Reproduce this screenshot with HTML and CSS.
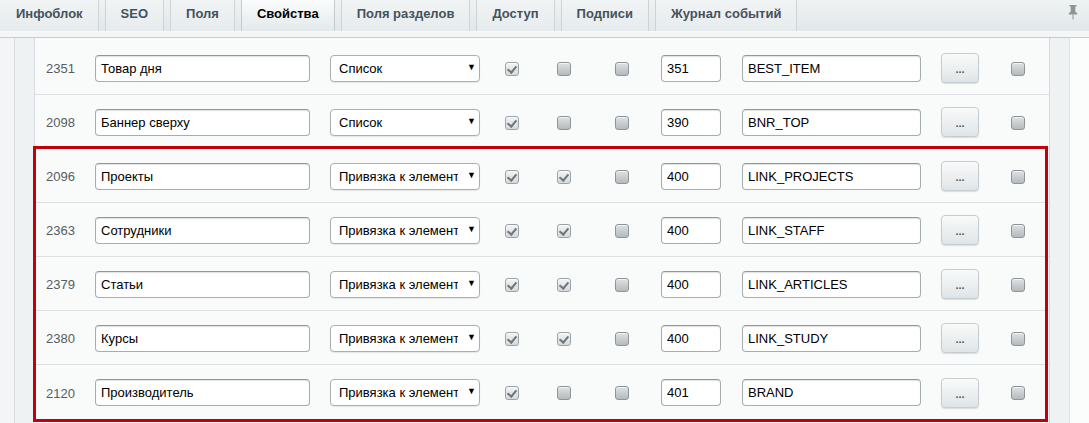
FILE: index.html
```html
<!DOCTYPE html>
<html lang="ru">
<head>
<meta charset="utf-8">
<link rel="stylesheet" href="styles.css">
</head>
<body>
<div class="tabs">
  <div class="tab first">Инфоблок</div>
  <div class="tab">SEO</div>
  <div class="tab">Поля</div>
  <div class="tab active">Свойства</div>
  <div class="tab">Поля разделов</div>
  <div class="tab">Доступ</div>
  <div class="tab">Подписи</div>
  <div class="tab">Журнал событий</div>
  <div class="pin">
    <svg width="10" height="16" viewBox="0 0 10 16"><path d="M1.5 1h7v1.5h-1.2v5l2 2v1H0.7v-1l2-2v-5H1.5z" fill="#8c9598"/><rect x="4.5" y="10.5" width="1" height="5" fill="#8c9598"/></svg>
  </div>
</div>
<div class="frame">
  <div class="strip"></div>
  <div class="panel">
    <div class="row">
      <div class="id">2351</div>
      <div><input class="inp name" value="Товар дня"></div>
      <div><div class="sel"><span class="seltext">Список</span><span class="arrow">▼</span></div></div>
      <div><span class="cb on"></span></div>
      <div><span class="cb"></span></div>
      <div><span class="cb"></span></div>
      <div><input class="inp sort" value="351"></div>
      <div><input class="inp code" value="BEST_ITEM"></div>
      <div><span class="btn">...</span></div>
      <div><span class="cb"></span></div>
    </div>
    <div class="row">
      <div class="id">2098</div>
      <div><input class="inp name" value="Баннер сверху"></div>
      <div><div class="sel"><span class="seltext">Список</span><span class="arrow">▼</span></div></div>
      <div><span class="cb on"></span></div>
      <div><span class="cb"></span></div>
      <div><span class="cb"></span></div>
      <div><input class="inp sort" value="390"></div>
      <div><input class="inp code" value="BNR_TOP"></div>
      <div><span class="btn">...</span></div>
      <div><span class="cb"></span></div>
    </div>
    <div class="highlight">
      <div class="row">
        <div class="id">2096</div>
        <div><input class="inp name" value="Проекты"></div>
        <div><div class="sel"><span class="seltext">Привязка к элемент</span><span class="arrow">▼</span></div></div>
        <div><span class="cb on"></span></div>
        <div><span class="cb on"></span></div>
        <div><span class="cb"></span></div>
        <div><input class="inp sort" value="400"></div>
        <div><input class="inp code" value="LINK_PROJECTS"></div>
        <div><span class="btn">...</span></div>
        <div><span class="cb"></span></div>
      </div>
      <div class="row">
        <div class="id">2363</div>
        <div><input class="inp name" value="Сотрудники"></div>
        <div><div class="sel"><span class="seltext">Привязка к элемент</span><span class="arrow">▼</span></div></div>
        <div><span class="cb on"></span></div>
        <div><span class="cb on"></span></div>
        <div><span class="cb"></span></div>
        <div><input class="inp sort" value="400"></div>
        <div><input class="inp code" value="LINK_STAFF"></div>
        <div><span class="btn">...</span></div>
        <div><span class="cb"></span></div>
      </div>
      <div class="row">
        <div class="id">2379</div>
        <div><input class="inp name" value="Статьи"></div>
        <div><div class="sel"><span class="seltext">Привязка к элемент</span><span class="arrow">▼</span></div></div>
        <div><span class="cb on"></span></div>
        <div><span class="cb on"></span></div>
        <div><span class="cb"></span></div>
        <div><input class="inp sort" value="400"></div>
        <div><input class="inp code" value="LINK_ARTICLES"></div>
        <div><span class="btn">...</span></div>
        <div><span class="cb"></span></div>
      </div>
      <div class="row">
        <div class="id">2380</div>
        <div><input class="inp name" value="Курсы"></div>
        <div><div class="sel"><span class="seltext">Привязка к элемент</span><span class="arrow">▼</span></div></div>
        <div><span class="cb on"></span></div>
        <div><span class="cb on"></span></div>
        <div><span class="cb"></span></div>
        <div><input class="inp sort" value="400"></div>
        <div><input class="inp code" value="LINK_STUDY"></div>
        <div><span class="btn">...</span></div>
        <div><span class="cb"></span></div>
      </div>
      <div class="row">
        <div class="id">2120</div>
        <div><input class="inp name" value="Производитель"></div>
        <div><div class="sel"><span class="seltext">Привязка к элемент</span><span class="arrow">▼</span></div></div>
        <div><span class="cb on"></span></div>
        <div><span class="cb"></span></div>
        <div><span class="cb"></span></div>
        <div><input class="inp sort" value="401"></div>
        <div><input class="inp code" value="BRAND"></div>
        <div><span class="btn">...</span></div>
        <div><span class="cb"></span></div>
      </div>
    </div>
  </div>
  <div class="strip right"></div>
  <div class="outer"></div>
</div>
</body>
</html>
```

FILE: styles.css
```css
* { box-sizing: border-box; }
html, body { margin: 0; padding: 0; }
body {
  width: 1089px;
  height: 423px;
  overflow: hidden;
  background: #f3f5f6;
  font-family: "Liberation Sans", Arial, sans-serif;
  font-size: 13px;
  color: #000;
}
.tabs {
  display: flex;
  gap: 6px;
  height: 32px;
  background: linear-gradient(#eef2f3, #e2e8ea);
  border-bottom: 1px solid #f7f9f9;
  position: relative;
}
.tab {
  height: 31px;
  padding: 0 15px;
  display: flex;
  align-items: center;
  padding-bottom: 5px;
  font-weight: bold;
  color: #45525b;
  background: linear-gradient(#f1f4f5, #e6ebed);
  border-left: 1px solid #cdd4d7;
  border-right: 1px solid #cdd4d7;
  white-space: nowrap;
}
.tab.first { border-left: none; padding-left: 16px; }
.tab.active {
  color: #000;
  background: linear-gradient(#fbfcfc, #e3e9eb);
  border-color: #c3cbcf;
}
.pin {
  margin-left: auto;
  margin-right: 11px;
  padding-top: 4px;
}
.frame {
  display: flex;
  margin-top: 5px;
  border-top: 1px solid #c6cdd0;
  height: 386px;
  background: #f3f6f6;
}
.strip {
  width: 35px;
  border-right: 1px solid #d6dcdf;
  background: linear-gradient(90deg, #f3f5f6 0, #f3f5f6 14px, #d9dfe1 14px, #d9dfe1 15px, #eef2f3 15px);
  flex: none;
}
.strip.right {
  width: 20px;
  background: #eef2f3;
  border-right: 1px solid #dde2e4;
  border-left: none;
}
.outer { flex: 1; background: #fbfcfc; }
.panel {
  width: 1015px;
  flex: none;
  background: #f9fafa;
  padding-top: 3px;
  border-right: 1px solid #d3d9dc;
}
.row {
  height: 54px;
  border-bottom: 1px solid #dcdfe1;
  display: grid;
  grid-template-columns: 49px 235px 175px 52px 58px 46px 81px 199px 70px 1fr;
  align-items: center;
  padding-left: 11px;
  padding-top: 1px;
}
.row > div { display: flex; align-items: center; }
.highlight .row:last-child { border-bottom: none; }
.id { color: #555d62; padding-top: 1px; }
.inp {
  height: 27px;
  border: 1px solid #a6adb1;
  border-top-color: #8f979c;
  border-radius: 4px;
  background: #fff;
  box-shadow: inset 0 1px 1px rgba(0,0,0,0.12);
  font-family: "Liberation Sans", Arial, sans-serif;
  font-size: 13px;
  color: #000;
  padding: 0 5px;
  margin: 0;
  outline: none;
}
.name { width: 215px; }
.sort { width: 60px; }
.code { width: 179px; }
.sel {
  width: 150px;
  height: 27px;
  border: 1px solid #a9b0b4;
  border-radius: 4px;
  background: #fff;
  box-shadow: 0 1px 1px rgba(0,0,0,0.08);
  display: flex;
  align-items: center;
  padding-left: 8px;
}
.seltext {
  width: 119px;
  flex: none;
  overflow: hidden;
  white-space: nowrap;
}
.arrow {
  font-size: 9px;
  margin-left: 9px;
  margin-top: -3px;
  color: #000;
}
.cb {
  display: block;
  width: 14px;
  height: 14px;
  border: 1px solid #8e9599;
  border-radius: 3px;
  background: linear-gradient(#dfe2e3, #b5babd);
  box-shadow: inset 0 1px 0 rgba(255,255,255,0.6);
  margin-top: 1px;
  position: relative;
}
.cb.on {
  background: linear-gradient(#f2f4f4, #d6dadc);
  border-color: #9ba2a6;
}
.cb.on::after {
  content: "";
  position: absolute;
  left: 3px;
  top: 1px;
  width: 4px;
  height: 7px;
  border-right: 2px solid #6f777b;
  border-bottom: 2px solid #6f777b;
  transform: rotate(40deg);
}
.btn {
  width: 38px;
  height: 30px;
  border: 1px solid #c6cdd1;
  border-radius: 4px;
  background: linear-gradient(#f9fafa, #dfe5e7);
  box-shadow: 0 1px 1px rgba(0,0,0,0.12);
  display: flex;
  align-items: center;
  justify-content: center;
  font-size: 11px;
  font-weight: bold;
  color: #535c61;
  padding-top: 2px;
}
.highlight { position: relative; }
.highlight::after {
  content: "";
  position: absolute;
  left: -2px;
  right: 1px;
  top: -3px;
  bottom: -3px;
  border: 3px solid #c0000b;
  pointer-events: none;
}
```
